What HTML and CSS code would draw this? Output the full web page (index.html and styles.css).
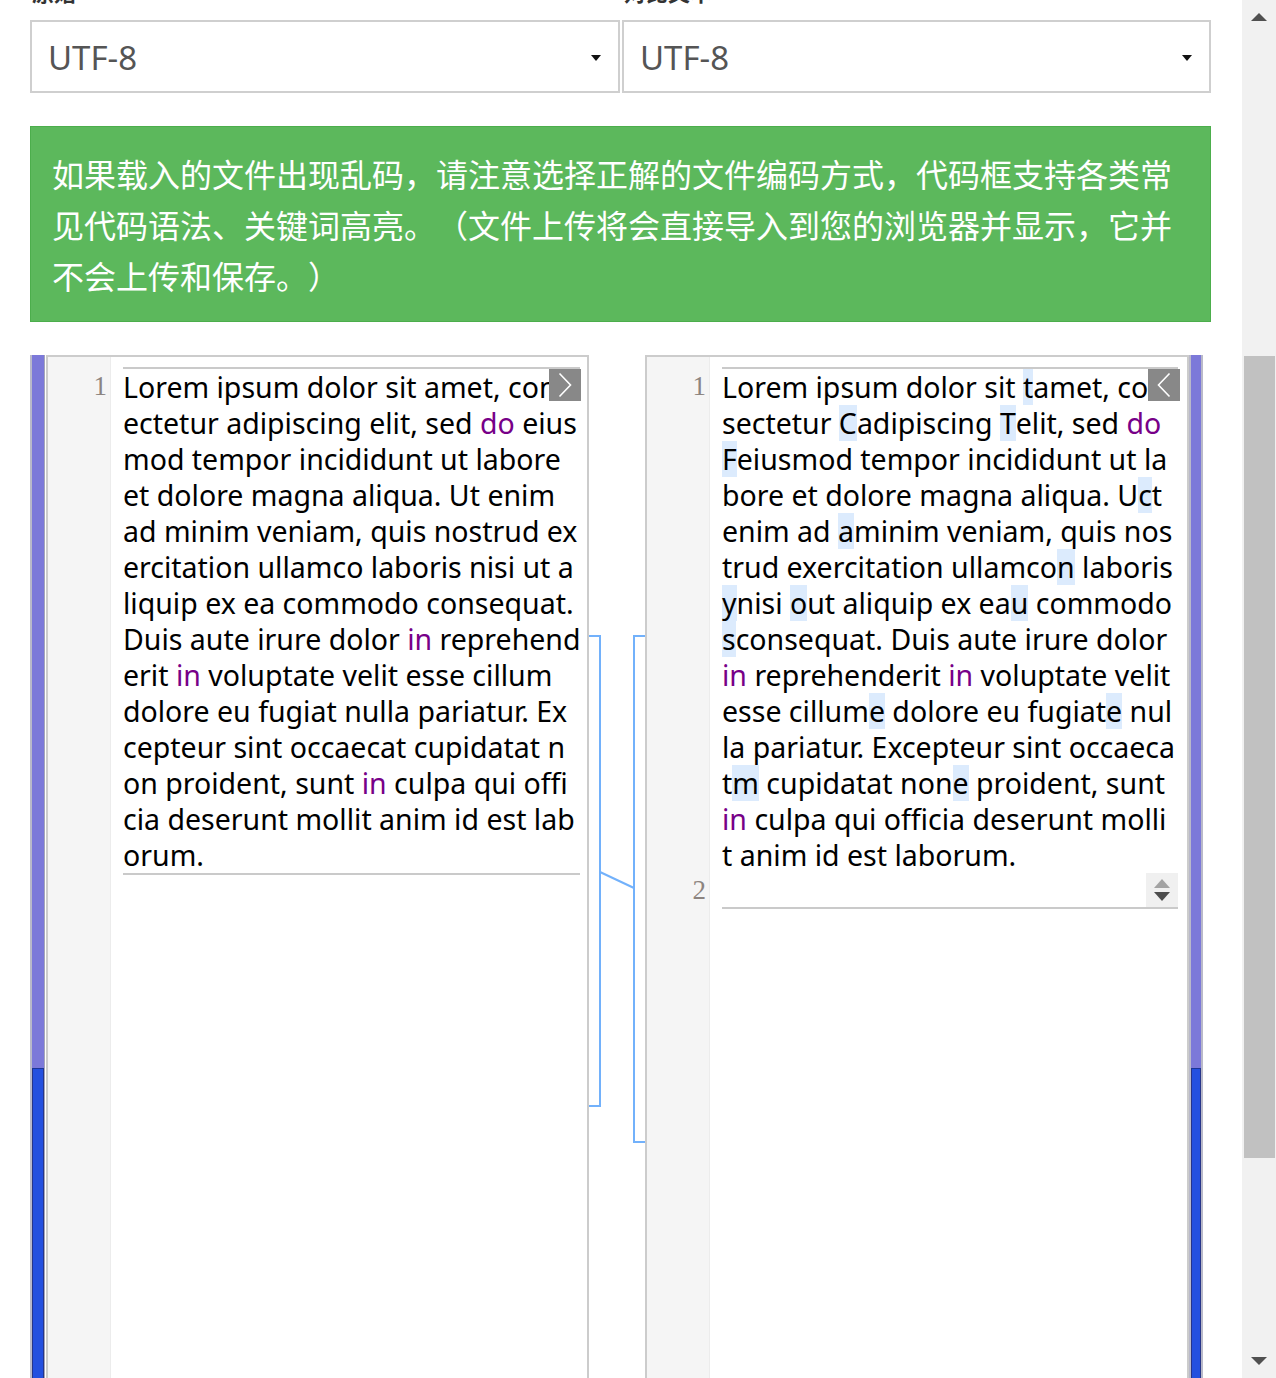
FILE: index.html
```html
<!DOCTYPE html>
<html lang="zh-CN">
<head>
<meta charset="utf-8">
<title>文本对比</title>
<link rel="stylesheet" href="styles.css">
</head>
<body>
<div class="viewport">
  <main class="page">
    <div class="labels"><span class="lbl">原始</span><span class="lbl">对比文本</span></div>
    <div class="selects">
      <div class="select">UTF-8<i class="caret"></i></div>
      <div class="select">UTF-8<i class="caret"></i></div>
    </div>
    <div class="alert">如果载入的文件出现乱码，请注意选择正解的文件编码方式，代码框支持各类常见代码语法、关键词高亮。（文件上传将会直接导入到您的浏览器并显示，它并不会上传和保存。）</div>

    <div class="diff">
      <div class="mbar mbar-left"><div class="seg-a"></div><div class="seg-b"></div></div>

      <div class="editor editor-left">
        <div class="gutter"><div class="ln ln-block14">1</div></div>
        <div class="code">
          <div class="chg">
            <div class="line">Lorem ipsum dolor sit amet, con<span class="mk"><svg width="32" height="32" viewBox="0 0 32 32"><polyline points="10.5,4.5 21.5,16 10.5,27.5" fill="none" stroke="#fff" stroke-width="1.6"/></svg></span></div>
            <div class="line">ectetur adipiscing elit, sed <span class="kw">do</span> eius</div>
            <div class="line">mod tempor incididunt ut labore</div>
            <div class="line">et dolore magna aliqua. Ut enim</div>
            <div class="line">ad minim veniam, quis nostrud ex</div>
            <div class="line">ercitation ullamco laboris nisi ut a</div>
            <div class="line">liquip ex ea commodo consequat.</div>
            <div class="line">Duis aute irure dolor <span class="kw">in</span> reprehend</div>
            <div class="line">erit <span class="kw">in</span> voluptate velit esse cillum</div>
            <div class="line">dolore eu fugiat nulla pariatur. Ex</div>
            <div class="line">cepteur sint occaecat cupidatat n</div>
            <div class="line">on proident, sunt <span class="kw">in</span> culpa qui offi</div>
            <div class="line">cia deserunt mollit anim id est lab</div>
            <div class="line">orum.</div>
          </div>
        </div>
      </div>

      <svg class="conn" width="56" height="1100" viewBox="0 0 56 1100">
        <path d="M0 281 H11 V751 H0" fill="none" stroke="#72b1fb" stroke-width="2"/>
        <path d="M56 281 H45 V787 H56" fill="none" stroke="#72b1fb" stroke-width="2"/>
        <path d="M11 517 L45 533" fill="none" stroke="#72b1fb" stroke-width="2"/>
      </svg>

      <div class="editor editor-right">
        <div class="gutter"><div class="ln ln-block14">1</div><div class="ln">2</div></div>
        <div class="code">
          <div class="chg">
            <div class="line">Lorem ipsum dolor sit <span class="ins">t</span>amet, con<span class="mk mk-r"><svg width="32" height="32" viewBox="0 0 32 32"><polyline points="21.5,4.5 10.5,16 21.5,27.5" fill="none" stroke="#fff" stroke-width="1.6"/></svg></span></div>
            <div class="line">sectetur <span class="ins">C</span>adipiscing <span class="ins">T</span>elit, sed <span class="kw">do</span></div>
            <div class="line"><span class="ins">F</span>eiusmod tempor incididunt ut la</div>
            <div class="line">bore et dolore magna aliqua. U<span class="ins">c</span>t</div>
            <div class="line">enim ad <span class="ins">a</span>minim veniam, quis nos</div>
            <div class="line">trud exercitation ullamco<span class="ins">n</span> laboris</div>
            <div class="line"><span class="ins">y</span>nisi <span class="ins">o</span>ut aliquip ex ea<span class="ins">u</span> commodo</div>
            <div class="line"><span class="ins">s</span>consequat. Duis aute irure dolor</div>
            <div class="line"><span class="kw">in</span> reprehenderit <span class="kw">in</span> voluptate velit</div>
            <div class="line">esse cillum<span class="ins">e</span> dolore eu fugiat<span class="ins">e</span> nul</div>
            <div class="line">la pariatur. Excepteur sint occaeca</div>
            <div class="line">t<span class="ins">m</span> cupidatat non<span class="ins">e</span> proident, sunt</div>
            <div class="line"><span class="kw">in</span> culpa qui officia deserunt molli</div>
            <div class="line">t anim id est laborum.</div>
            <div class="line line-last"><span class="spin"><i class="sp-up"></i><i class="sp-down"></i></span></div>
          </div>
        </div>
      </div>

      <div class="mbar mbar-right"><div class="seg-a"></div><div class="seg-b"></div></div>
    </div>
  </main>

  <div class="vscroll">
    <div class="sb-btn"><i class="tri-up"></i></div>
    <div class="sb-track"><div class="sb-thumb"></div></div>
    <div class="sb-btn"><i class="tri-down"></i></div>
  </div>
</div>
</body>
</html>
```
FILE: styles.css
```css
html, body {
  margin: 0;
  padding: 0;
  overflow: hidden;
  background: #fff;
}
body {
  font-family: "Noto Sans", "Noto Sans CJK SC", sans-serif;
  color: #000;
}
.viewport {
  display: flex;
  width: 1276px;
  height: 1378px;
  overflow: hidden;
}
.page {
  width: 1242px;
  flex: none;
  padding-left: 30px;
  box-sizing: border-box;
  overflow: hidden;
}

/* labels, mostly scrolled out of view */
.labels {
  display: grid;
  grid-template-columns: 592px 589px;
  height: 40px;
  margin-top: -29px;
  margin-bottom: 9px;
}
.lbl {
  font-family: "Noto Sans CJK SC", sans-serif;
  font-weight: bold;
  font-size: 22px;
  line-height: 40px;
  color: #333;
  padding-left: 2px;
}

/* selects */
.selects {
  display: grid;
  grid-template-columns: 590px 589px;
  gap: 2px;
  width: 1181px;
}
.select {
  position: relative;
  height: 73px;
  box-sizing: border-box;
  border: 2px solid #cfcfcf;
  padding-left: 16px;
  font-size: 33px;
  line-height: 71px;
  color: #555;
  background: #fff;
}
.caret {
  position: absolute;
  right: 17px;
  top: 33px;
  width: 0;
  height: 0;
  border-left: 5px solid transparent;
  border-right: 5px solid transparent;
  border-top: 6px solid #111;
}

/* alert */
.alert {
  width: 1181px;
  box-sizing: border-box;
  margin-top: 33px;
  background: #5cb85c;
  border: 1px solid #4cae4c;
  padding: 21px 24px 20px 21px;
  color: #fff;
  font-family: "Noto Sans CJK SC", sans-serif;
  font-size: 32px;
  line-height: 51px;
  text-spacing-trim: space-all;
}

/* diff area */
.diff {
  display: flex;
  margin-top: 33px;
  height: 1100px;
  width: 1173px;
}
.mbar {
  display: flex;
  flex-direction: column;
  box-sizing: border-box;
  height: 1100px;
  flex: none;
}
.mbar-left {
  width: 15px;
  border-left: 2px solid #b9b9c9;
  border-right: 1px solid #a6a6b8;
  margin-right: 1px;
}
.mbar-right {
  width: 14px;
  border-left: 2px solid #b9b9c9;
  border-right: 2px solid #b9b9c9;
}
.seg-a {
  height: 713px;
  background: #7c79d9;
  flex: none;
}
.seg-b {
  flex: 1;
  background: #2450df;
  border-top: 1px solid #1c3596;
  box-shadow: inset 1px 0 0 #26358a, inset -1px 0 0 #26358a;
}

.editor {
  display: flex;
  box-sizing: border-box;
  height: 1100px;
  border: 2px solid #cccccc;
  flex: none;
  background: #fff;
}
.editor-left { width: 543px; }
.editor-right { width: 544px; }

.gutter {
  width: 62px;
  flex: none;
  background: #f5f5f5;
  border-right: 1px solid #ececec;
  padding-top: 11px;
  box-sizing: content-box;
}
.ln {
  height: 36px;
  line-height: 36px;
  text-align: right;
  padding-right: 3px;
  font-family: "Liberation Serif", serif;
  font-size: 27px;
  color: #8c8480;
}
.ln-block14 { height: 504px; }

.code {
  flex: 1;
  min-width: 0;
  padding: 10px 7px 0 12px;
}
.editor-right .code { padding: 10px 9px 0 12px; }

.chg {
  border-top: 2px solid #cacaca;
  border-bottom: 2px solid #cacaca;
}
.line {
  position: relative;
  height: 36px;
  line-height: 36px;
  font-size: 28.5px;
  white-space: nowrap;
  overflow: visible;
  color: #000;
}
.kw { color: #770088; }
.ins {
  display: inline-block;
  background: #dcebfd;
  height: 36px;
  vertical-align: top;
}
.mk {
  position: absolute;
  top: 0;
  right: -1px;
  width: 32px;
  height: 32px;
  background: #888888;
}
.mk svg { display: block; }
.mk-r { right: -2px; }

.line-last {
  display: flex;
  justify-content: flex-end;
  align-items: flex-end;
  height: 34px;
}
.spin {
  display: flex;
  flex-direction: column;
  align-items: center;
  justify-content: center;
  gap: 4px;
  width: 32px;
  height: 34px;
  background: #f0f0f0;
}
.sp-up {
  width: 0; height: 0;
  border-left: 8px solid transparent;
  border-right: 8px solid transparent;
  border-bottom: 9px solid #a3a3a3;
}
.sp-down {
  width: 0; height: 0;
  border-left: 8px solid transparent;
  border-right: 8px solid transparent;
  border-top: 9px solid #4d4d4d;
}

.conn {
  display: block;
  flex: none;
  width: 56px;
}

/* page scrollbar */
.vscroll {
  width: 34px;
  flex: none;
  background: #f1f1f1;
  display: flex;
  flex-direction: column;
  height: 1378px;
}
.sb-btn {
  height: 34px;
  flex: none;
  display: flex;
  align-items: center;
  justify-content: center;
}
.tri-up {
  width: 0; height: 0;
  border-left: 8px solid transparent;
  border-right: 8px solid transparent;
  border-bottom: 8px solid #505050;
}
.tri-down {
  width: 0; height: 0;
  border-left: 8px solid transparent;
  border-right: 8px solid transparent;
  border-top: 8px solid #505050;
}
.sb-track {
  flex: 1;
  padding: 322px 1px 0 2px;
}
.sb-thumb {
  height: 802px;
  background: #c1c1c1;
}
```
